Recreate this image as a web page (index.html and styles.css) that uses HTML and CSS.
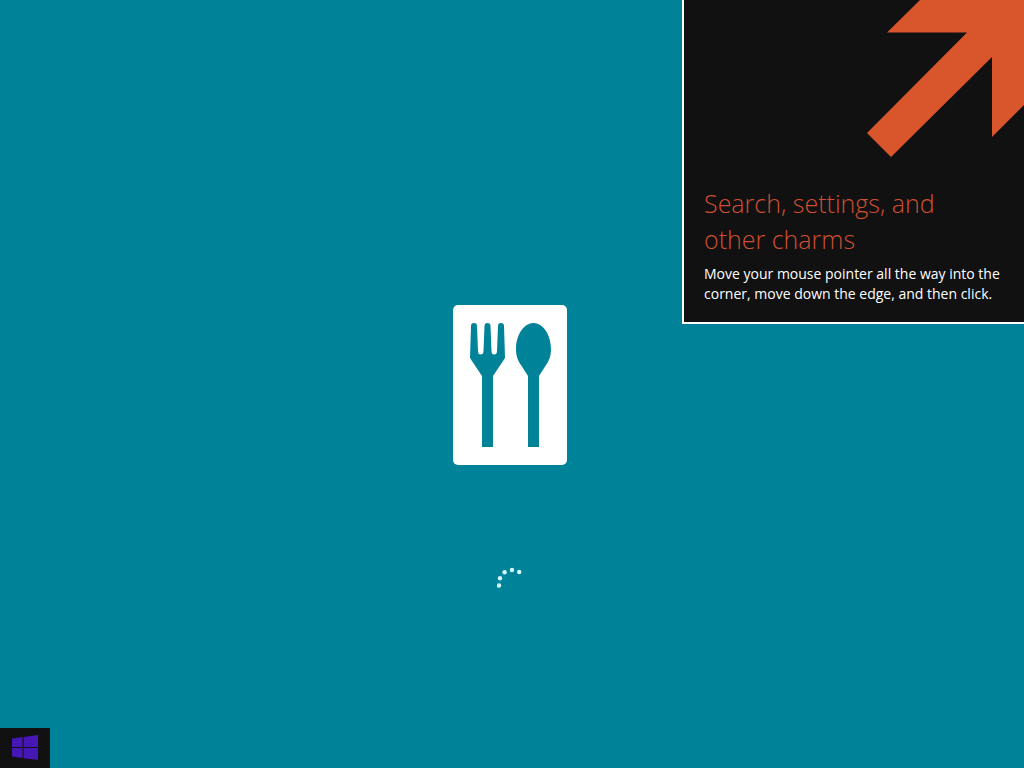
FILE: index.html
```html
<!DOCTYPE html>
<html lang="en">
    <head>
        <meta charset="utf-8">
        <title>Food</title>
        <link rel="stylesheet" href="styles.css">
    </head>
    <body>
        <main class="splash">
            <svg class="logo" viewBox="0 0 118 160" role="img" aria-label="Fork and spoon">
                <rect class="logo-card" width="114" height="160" rx="5"/>
                <path class="cutlery" d="M18 21Q18 18 21 18T24 21L25 46Q25 49.500 27.700 49.500T30.500 46L31.500 21Q31.500 18 34.500 18T37.500 21L38.500 46Q38.500 49.500 41.200 49.500T44 46L45 21Q45 18 48 18T51 21L52 53L40 71V142H29V71L17 53Z"/>
                <path class="cutlery" d="M80.500 18C90 18 98 30 98 44C98 51 96 56 93 60L86 71V142H75V71L68 60C65 56 63 51 63 44C63 30 71 18 80.500 18Z"/>
            </svg>
            <svg class="spinner" viewBox="0 0 30 30" role="img" aria-label="Loading">
                <circle cx="2" cy="18.500" r="2.200"/>
                <circle cx="3" cy="11.200" r="2.200"/>
                <circle cx="7.600" cy="5.200" r="2.200"/>
                <circle cx="15" cy="3" r="2.200"/>
                <circle cx="22.200" cy="5" r="2.200"/>
            </svg>
        </main>

        <aside class="tip">
            <svg class="tip-arrow" viewBox="0 0 157 157" aria-hidden="true">
                <path d="M53 0L20 32.500H100L0 133L24 157L125 57V137L157 105V0Z"/>
            </svg>
            <h1>Search, settings, and other charms</h1>
            <p>Move your mouse pointer all the way into the corner, move down the edge, and then click.</p>
        </aside>

        <button class="start" type="button" aria-label="Start">
            <svg viewBox="0 0 26 26" aria-hidden="true">
                <path d="M0 3.500L10.500 2V12H0ZM11.500 1.900L26 0V12H11.500ZM0 13H10.500V23L0 21.500ZM11.500 13H26V25L11.500 23.200Z"/>
            </svg>
        </button>
    </body>
</html>
```

FILE: styles.css
```css
* {
    box-sizing: border-box;
}

body {
    margin: 0;
    background: #008299;
    color: #fff;
    font-family: "Open Sans", "Noto Sans", sans-serif;
}

.splash {
    display: grid;
    grid-template-rows: 1fr auto 1fr;
    justify-items: center;
    min-height: 100vh;
    padding-top: 2px;
}

.logo {
    grid-row: 2;
    width: 118px;
    height: 160px;
}

.logo-card {
    fill: #fff;
}

.cutlery {
    fill: #008299;
}

.spinner {
    grid-row: 3;
    width: 30px;
    height: 30px;
    margin-top: 102px;
    fill: #d5f8ff;
}

/* corner hint, sits over the splash */
.tip {
    position: absolute;
    top: 0;
    right: 0;
    width: 342px;
    padding-bottom: 18px;
    border-left: 2px solid #fff;
    border-bottom: 2px solid #fff;
    background: #111;
}

.tip-arrow {
    display: block;
    width: 157px;
    height: 157px;
    margin-left: auto;
    fill: #d9552c;
}

.tip h1 {
    margin: 28px 60px 7px 20px;
    color: #d04f33;
    font-size: 25px;
    font-weight: 300;
    line-height: 36px;
}

.tip p {
    margin: 0 20px;
    font-size: 14px;
    line-height: 20px;
}

.start {
    position: absolute;
    left: 0;
    bottom: 0;
    display: flex;
    align-items: center;
    justify-content: center;
    width: 50px;
    height: 40px;
    padding: 0;
    border: 0;
    background: #111;
}

.start svg {
    width: 26px;
    height: 26px;
    fill: #4617b4;
}
```
